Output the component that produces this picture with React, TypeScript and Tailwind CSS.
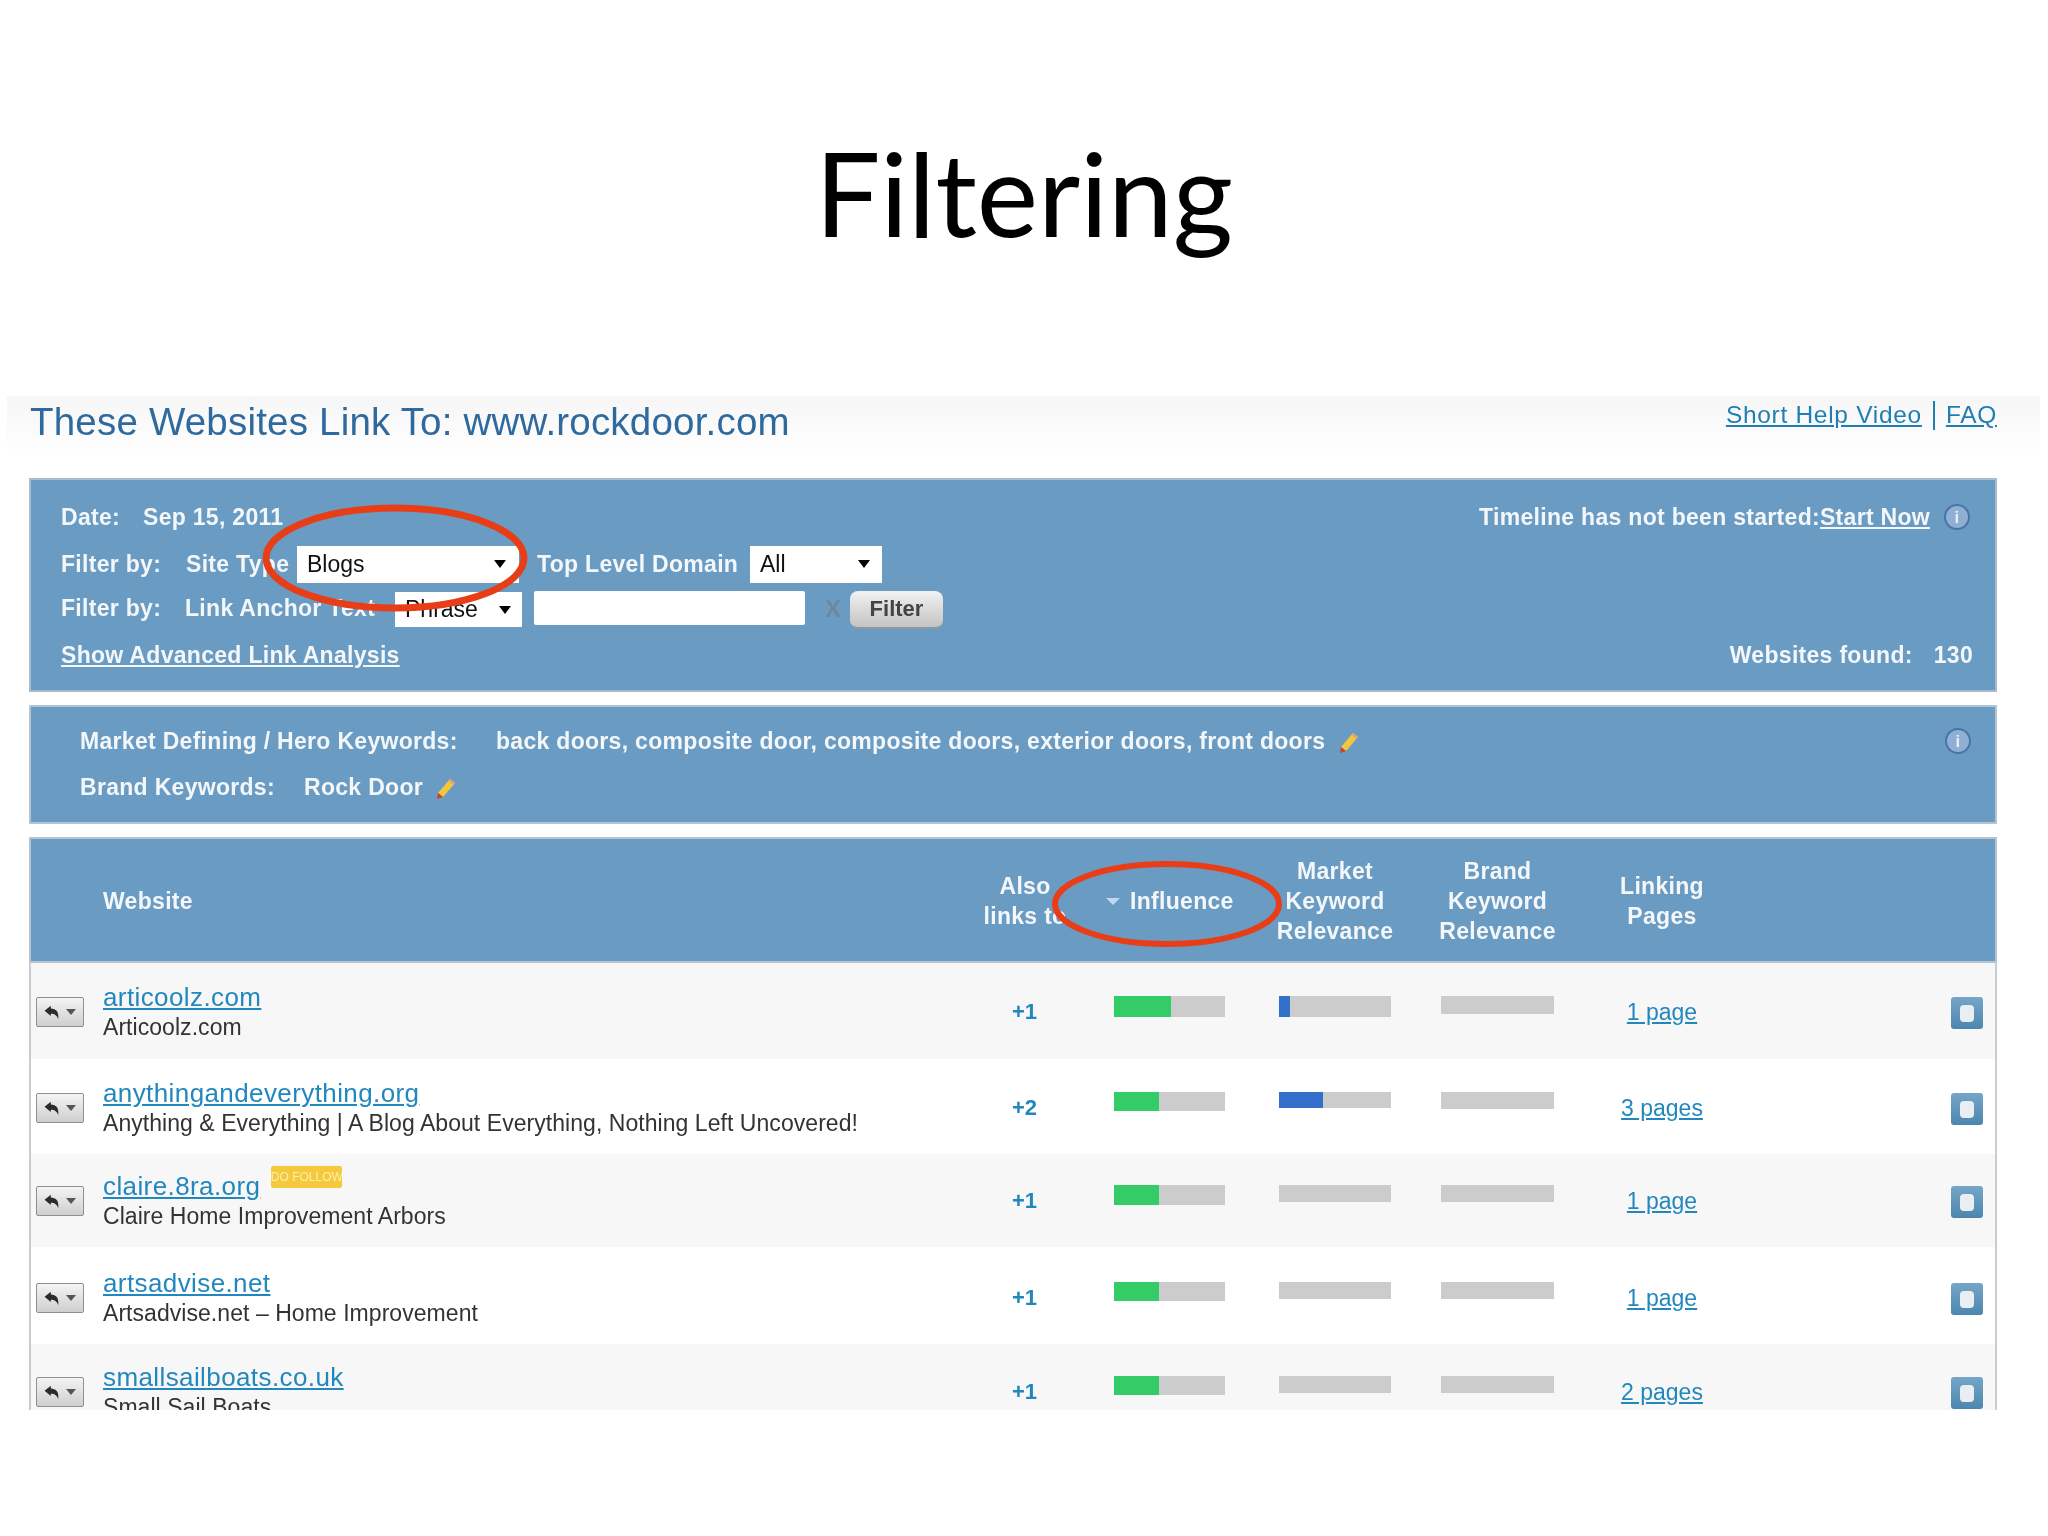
import React from "react";

const rows = [
	{ id: 1, url: "articoolz.com", desc: "Articoolz.com", also: "+1", pages: "1 page", box: "h-[96px] pt-[18px] bg-[#f7f7f8]", inf: "w-[57px]", infH: "h-[21px]", mkt: "w-[11px]", mktH: "h-[21px]", brandH: "h-[18px]" },
	{ id: 2, url: "anythingandeverything.org", desc: "Anything & Everything | A Blog About Everything, Nothing Left Uncovered!", also: "+2", pages: "3 pages", box: "h-[95px] pt-[18px] bg-white", inf: "w-[45px]", infH: "h-[19px]", mkt: "w-[44px]", mktH: "h-[16px]", brandH: "h-[17px]" },
	{ id: 3, url: "claire.8ra.org", desc: "Claire Home Improvement Arbors", also: "+1", pages: "1 page", box: "h-[93px] pt-[16px] bg-[#f7f7f8]", inf: "w-[45px]", infH: "h-[20px]", mkt: "w-0", mktH: "h-[17px]", brandH: "h-[17px]", badge: true },
	{ id: 4, url: "artsadvise.net", desc: "Artsadvise.net – Home Improvement", also: "+1", pages: "1 page", box: "h-[97px] pt-[20px] bg-white", inf: "w-[45px]", infH: "h-[19px]", mkt: "w-0", mktH: "h-[17px]", brandH: "h-[17px]" },
	{ id: 5, url: "smallsailboats.co.uk", desc: "Small Sail Boats", also: "+1", pages: "2 pages", box: "h-[80px] pt-[17px] bg-[#f7f7f8]", inf: "w-[45px]", infH: "h-[19px]", mkt: "w-0", mktH: "h-[17px]", brandH: "h-[17px]" },
];

const Pencil = () => (
	<svg width="22" height="24" viewBox="0 0 22 24" className="inline-block">
		<path d="M15 2 L20 6 L8 20 L3 16 Z" fill="#f2c83a" />
		<path d="M15 2 L20 6 L18.5 8 L13.5 4 Z" fill="#e2a07a" />
		<path d="M3 16 L8 20 L2 22 Z" fill="#c9452c" />
	</svg>
);

const Info = () => (
	<span className="flex h-[26px] w-[26px] items-center justify-center rounded-full border-2 border-[#4a73a8] bg-[#8fb0d4] text-[17px] font-bold leading-none text-[#e6eef6]">
		i
	</span>
);

const Caret = ({ left }: { left: string }) => (
	<span className={`absolute top-[14px] ${left} h-0 w-0 border-x-[6px] border-t-[8px] border-x-transparent border-t-black`} />
);

const Select = ({ label, box, text, caret }: { label: string; box: string; text: string; caret: string }) => (
	<span className={`relative block bg-white font-normal tracking-normal text-[#111] ${box}`}>
		<span className={`absolute left-[10px] ${text}`}>{label}</span>
		<Caret left={caret} />
	</span>
);

const ActionButton = () => (
	<span className="mt-[16px] ml-[5px] flex h-[30px] w-[48px] items-center justify-center gap-[5px] rounded-[2px] border border-[#8f8f8f] bg-gradient-to-b from-[#f4f4f4] to-[#cfcfcf]">
		<svg width="17" height="15" viewBox="0 0 15 13">
			<path d="M0.5 5 L6 0.5 L6 3 C10.5 3 13.5 6 12.5 12.5 C11.5 8.5 9 7.5 6 7.5 L6 9.5 Z" fill="#2b2b2b" />
		</svg>
		<span className="h-0 w-0 border-x-[5px] border-t-[6px] border-x-transparent border-t-[#555]" />
	</span>
);

const App = () => {
	return (
		<div className="h-[1536px] w-[2048px] overflow-hidden bg-white font-['Liberation_Sans',sans-serif]">
			<h1 className="flex h-[396px] items-start justify-center pt-[115px] font-['Lato',sans-serif] text-[116px] leading-[156px] text-black">
				Filtering
			</h1>

			<div className="relative h-[1014px] overflow-hidden pr-[51px] pl-[29px] blur-[0.4px]">
				<div className="absolute top-0 left-[7px] h-[60px] w-[2033px] bg-gradient-to-b from-[#f6f6f6] to-white" />

				<div className="relative flex h-[82px] justify-between">
					<span className="pt-[3px] pl-[1px] text-[38.5px] leading-[46px] tracking-[0.2px] text-[#2f6a9e]">These Websites Link To: www.rockdoor.com</span>
					<span className="flex h-[30px] items-center pt-[8px] text-[24.5px] tracking-[0.7px] text-[#1f7fb5]">
						<a className="underline">Short Help Video</a>
						<span className="mx-[11px] h-[29px] w-[2px] bg-[#1f7fb5]" />
						<a className="underline">FAQ</a>
					</span>
				</div>

				{/* filter panel */}
				<div className="h-[214px] border-2 border-[#a9bccd] bg-[#6a9bc3] pt-[22px] pr-[22px] pl-[30px] text-[23px] leading-[30px] font-bold tracking-[0.3px] text-[#f4f7fa]">
					<div className="flex h-[30px] items-center justify-between">
						<span className="flex">
							<span className="w-[82px]">Date:</span>
							<span>Sep 15, 2011</span>
						</span>
						<span className="flex items-center">
							<span>Timeline has not been started:</span>
							<a className="mr-[14px] underline">Start Now</a>
							<span className="mr-[3px]"><Info /></span>
						</span>
					</div>
					<div className="mt-[13px] flex h-[37px] items-center">
						<span className="w-[125px]">Filter by:</span>
						<span className="w-[111px]">Site Type</span>
						<Select label="Blogs" box="mt-[2px] h-[37px] w-[222px]" text="top-[3px]" caret="right-[13px]" />
						<span className="ml-[18px] w-[213px]">Top Level Domain</span>
						<Select label="All" box="mt-[2px] h-[37px] w-[132px]" text="top-[3px]" caret="right-[12px]" />
					</div>
					<div className="mt-[9px] flex h-[38px] items-start">
						<span className="w-[124px] pt-[2px]">Filter by:</span>
						<span className="w-[210px] pt-[2px]">Link Anchor Text</span>
						<Select label="Phrase" box="mt-[1px] h-[35px] w-[127px]" text="top-[2px]" caret="right-[11px]" />
						<span className="ml-[12px] h-[34px] w-[271px] rounded-[2px] bg-white" />
						<span className="ml-[20px] w-[25px] pt-[3px] text-[24px] font-bold text-[#6f879c]">X</span>
						<span className="flex h-[38px] w-[93px] items-center justify-center rounded-[8px] border-b-2 border-[#8c9aa5] bg-gradient-to-b from-[#f2f2f2] to-[#c4c4c4] text-[22px] font-bold tracking-normal text-[#444]">Filter</span>
					</div>
					<div className="mt-[11px] flex items-center justify-between">
						<a className="underline">Show Advanced Link Analysis</a>
						<span className="flex">
							<span className="mr-[21px]">Websites found:</span>
							<span>130</span>
						</span>
					</div>
				</div>

				{/* keywords panel */}
				<div className="mt-[13px] h-[119px] border-2 border-[#b4c4d2] bg-[#6a9bc3] pt-[19px] pr-[24px] pl-[49px] text-[23px] leading-[30px] font-bold tracking-[0.3px] text-[#f4f7fa]">
					<div className="flex items-center">
						<span className="w-[416px]">Market Defining / Hero Keywords:</span>
						<span>back doors, composite door, composite doors, exterior doors, front doors</span>
						<span className="ml-[13px]"><Pencil /></span>
						<span className="ml-auto"><Info /></span>
					</div>
					<div className="mt-[16px] flex items-center">
						<span className="w-[224px]">Brand Keywords:</span>
						<span>Rock Door</span>
						<span className="ml-[12px]"><Pencil /></span>
					</div>
				</div>

				{/* table header */}
				<div className="mt-[13px] flex h-[126px] items-center border-2 border-[#b4c4d2] bg-[#6a9bc3] text-[23px] leading-[30px] font-bold tracking-[0.3px] text-[#f4f7fa]">
					<span className="ml-[72px] w-[867px] pt-[2px]">Website</span>
					<span className="w-[110px] pt-[2px] text-center">Also<br />links to</span>
					<span className="flex w-[180px] items-center pt-[2px] pl-[26px]">
						<span className="mr-[10px] h-0 w-0 border-x-[7px] border-t-[7px] border-x-transparent border-t-[#c2d8ee]" />
						Influence
					</span>
					<span className="w-[150px] pt-[2px] text-center">Market<br />Keyword<br />Relevance</span>
					<span className="w-[175px] pt-[2px] text-center">Brand<br />Keyword<br />Relevance</span>
					<span className="w-[154px] pt-[2px] text-center">Linking<br />Pages</span>
				</div>

				{/* table rows */}
				{rows.map((row) => (
					<div key={row.id} className={`flex border-x-2 border-[#c9cdd1] ${row.box}`}>
						<span className="w-[72px]"><ActionButton /></span>
						<div className="w-[867px] pt-[1px] leading-[30px]">
							<div className="flex items-start">
								<a className="text-[26px] tracking-[0.4px] text-[#2187bd] underline">{row.url}</a>
								{row.badge && (
									<span className="mt-[-5px] ml-[11px] flex h-[22px] w-[71px] items-center justify-center rounded-[2px] bg-[#f5c93c] text-[12px] leading-none whitespace-nowrap text-[#fbeeb0]">DO FOLLOW</span>
								)}
							</div>
							<div className="text-[23px] tracking-[0.05px] text-[#333]">{row.desc}</div>
						</div>
						<span className="mt-[16px] h-[30px] w-[109px] text-center text-[22px] leading-[30px] font-bold text-[#2187bd]">{row.also}</span>
						<div className="mt-[15px] flex w-[180px] justify-center">
							<div className={`flex w-[111px] bg-[#cccccc] ${row.infH}`}>
								<div className={`h-full bg-[#33cc66] ${row.inf}`} />
							</div>
						</div>
						<div className="mt-[15px] flex w-[151px] justify-center">
							<div className={`flex w-[112px] bg-[#cccccc] ${row.mktH}`}>
								<div className={`h-full bg-[#3370cc] ${row.mkt}`} />
							</div>
						</div>
						<div className="mt-[15px] flex w-[175px] justify-center">
							<div className={`w-[113px] bg-[#cccccc] ${row.brandH}`} />
						</div>
						<a className="mt-[16px] h-[30px] w-[154px] text-center text-[23px] leading-[30px] text-[#2187bd]"><span className="underline">{row.pages}</span></a>
						<span className="mt-[16px] mr-[12px] ml-auto flex h-[32px] w-[32px] items-center justify-center rounded-[3px] bg-gradient-to-b from-[#76a6c8] to-[#4c86ae]">
							<span className="h-[17px] w-[14px] rounded-[4px] bg-[#e8eef2]" />
						</span>
					</div>
				))}

				{/* red hand-drawn ovals */}
				<svg className="pointer-events-none absolute top-0 left-0 h-[1014px] w-[2048px]" viewBox="0 0 2048 1014" fill="none">
					<ellipse cx="395" cy="162" rx="129" ry="50" stroke="#e83e17" strokeWidth="7" />
					<ellipse cx="1167" cy="508" rx="112" ry="40" stroke="#e83e17" strokeWidth="6" />
				</svg>
			</div>
		</div>
	);
};

export default App;
